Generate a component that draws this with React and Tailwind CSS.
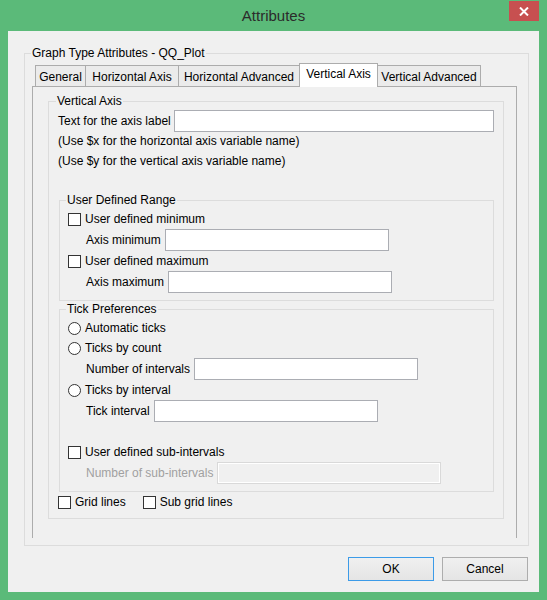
import React from 'react';

function CheckBox() {
  return <span className="block w-[13px] h-[13px] shrink-0 border border-[#333333] bg-white" />;
}

function Radio() {
  return <span className="block w-[13px] h-[13px] shrink-0 rounded-full border border-[#333333] bg-white" />;
}

function TextBox({ className = '', disabled = false }) {
  return (
    <div
      className={`h-[22px] shrink-0 border ${
        disabled ? 'border-[#d9d9d9] bg-[#f0f0f0] shadow-[inset_0_0_0_1px_#ffffff]' : 'border-[#abadb3] bg-white'
      } ${className}`}
    />
  );
}

function CheckRow({ label, className = '' }) {
  return (
    <div className={`flex items-center gap-[4px] h-[16px] ${className}`}>
      <CheckBox />
      <span>{label}</span>
    </div>
  );
}

function RadioRow({ label, className = '' }) {
  return (
    <div className={`flex items-center gap-[4px] h-[16px] ${className}`}>
      <Radio />
      <span>{label}</span>
    </div>
  );
}

function FieldRow({ label, className = '', disabled = false }) {
  return (
    <div className={`flex items-center gap-[4px] pl-[18px] ${className}`}>
      <span className={disabled ? 'text-[#a0a0a0]' : ''}>{label}</span>
      <TextBox className="w-[224px]" disabled={disabled} />
    </div>
  );
}

const tabs = [
  { name: 'General', w: 'w-[51px]' },
  { name: 'Horizontal Axis', w: 'w-[94px]' },
  { name: 'Horizontal Advanced', w: 'w-[122px]' },
  { name: 'Vertical Axis', w: 'w-[79px]', active: true },
  { name: 'Vertical Advanced', w: 'w-[104px]' },
];

export default function App() {
  return (
    <div className="w-[547px] h-[600px] bg-[#5bba79] flex flex-col font-['Liberation_Sans',Arial,sans-serif] text-[12px] leading-4 text-black">
      {/* Title bar */}
      <div className="relative h-[31px] shrink-0 flex items-center justify-center">
        <span className="text-[15px] text-[#2b2b2b] pt-px">Attributes</span>
        <div className="absolute right-[8px] top-px w-[30px] h-[20px] bg-[#c75050] flex items-center justify-center">
          <svg width="10" height="9" viewBox="0 0 10 9">
            <path d="M1 0.5 L9 8.5 M9 0.5 L1 8.5" stroke="#ffffff" strokeWidth="2" />
          </svg>
        </div>
      </div>

      {/* Client area */}
      <div className="flex-1 mx-[8px] mb-[8px] bg-[#f0f0f0] flex flex-col pt-[14px]">
        <fieldset className="ml-[16px] mr-[10px] border border-[#dcdcdc] pl-[7px] pr-[11px] pb-[7px]">
          <legend className="-ml-px px-px leading-4">Graph Type Attributes - QQ_Plot</legend>

          {/* Tabs */}
          <div className="flex items-end pl-[3px] pt-[2px] h-[25px]">
            {tabs.map((t, i) =>
              t.active ? (
                <div
                  key={t.name}
                  className={`${t.w} ${i > 0 ? '-ml-px' : ''} relative z-10 h-[24px] -mb-px bg-white border border-b-0 border-[#acacac] flex justify-center pt-[2px]`}
                >
                  {t.name}
                </div>
              ) : (
                <div
                  key={t.name}
                  className={`${t.w} ${i > 0 ? '-ml-px' : ''} h-[21px] bg-[#ebebeb] border border-b-0 border-[#acacac] flex justify-center pt-[3px]`}
                >
                  {t.name}
                </div>
              )
            )}
          </div>

          {/* Tab pane */}
          <div className="h-[452px] border-t border-l border-r border-[#acacac] pt-[6px] pl-[15px] pr-[12px]">
            <fieldset className="border border-[#dcdcdc] pl-[9px] pr-[9px] pb-[8px]">
              <legend className="-ml-[2px] px-px leading-4">Vertical Axis</legend>

              <div className="flex items-center gap-[3px] mt-px">
                <span>Text for the axis label</span>
                <TextBox className="flex-1" />
              </div>
              <div className="mt-px">(Use $x for the horizontal axis variable name)</div>
              <div className="mt-[4px]">(Use $y for the vertical axis variable name)</div>

              {/* User Defined Range */}
              <fieldset className="ml-px mt-[23px] border border-[#dcdcdc] pl-[8px] pb-[7px]">
                <legend className="-ml-[2px] px-px leading-4">User Defined Range</legend>
                <CheckRow label="User defined minimum" className="mt-[3px]" />
                <FieldRow label="Axis minimum" className="mt-[2px]" />
                <CheckRow label="User defined maximum" className="mt-[2px]" />
                <FieldRow label="Axis maximum" className="mt-[2px]" />
              </fieldset>

              {/* Tick Preferences */}
              <fieldset className="ml-px border border-[#dcdcdc] pl-[8px] pb-[7px]">
                <legend className="-ml-[2px] px-px leading-4">Tick Preferences</legend>
                <RadioRow label="Automatic ticks" className="mt-[3px]" />
                <RadioRow label="Ticks by count" className="mt-[4px]" />
                <FieldRow label="Number of intervals" className="mt-[2px]" />
                <RadioRow label="Ticks by interval" className="mt-[2px]" />
                <FieldRow label="Tick interval" className="mt-[2px]" />
                <CheckRow label="User defined sub-intervals" className="mt-[22px]" />
                <FieldRow label="Number of sub-intervals" className="mt-[2px]" disabled />
              </fieldset>

              <div className="flex items-center mt-[2px] h-[16px]">
                <CheckBox />
                <span className="ml-[4px]">Grid lines</span>
                <span className="ml-[17px]"><CheckBox /></span>
                <span className="ml-[4px]">Sub grid lines</span>
              </div>
            </fieldset>
          </div>
        </fieldset>

        {/* Buttons */}
        <div className="flex justify-end gap-[8px] mt-[11px] mr-[11px]">
          <button className="w-[86px] h-[24px] border border-[#3c9be8] bg-gradient-to-b from-[#f0f0f0] to-[#e5e5e5]">OK</button>
          <button className="w-[86px] h-[24px] border border-[#adadad] bg-gradient-to-b from-[#f0f0f0] to-[#e5e5e5]">Cancel</button>
        </div>
      </div>
    </div>
  );
}
